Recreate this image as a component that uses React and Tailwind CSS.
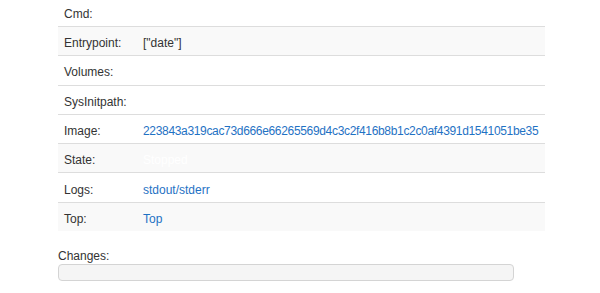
import React from "react";

const rows = [
  { label: "Cmd:", value: null, striped: false },
  { label: "Entrypoint:", value: '["date"]', striped: true },
  { label: "Volumes:", value: null, striped: false },
  { label: "SysInitpath:", value: null, striped: false },
  {
    label: "Image:",
    value: "223843a319cac73d666e66265569d4c3c2f416b8b1c2c0af4391d1541051be35",
    link: true,
    hash: true,
    striped: false,
  },
  { label: "State:", value: "Stopped", state: true, striped: true },
  { label: "Logs:", value: "stdout/stderr", link: true, striped: false },
  { label: "Top:", value: "Top", link: true, striped: true },
];

function Row({ row }) {
  return (
    <div
      className={`flex h-[29.3px] items-center border-t border-[#dddddd] pt-[4px] ${
        row.striped ? "bg-[#f9f9f9]" : "bg-white"
      }`}
    >
      <div className="w-[85px] pl-[6px] text-[#333333]">{row.label}</div>
      <div className="flex-1 whitespace-nowrap">
        {row.value &&
          (row.link ? (
            <a
              href="#"
              className={`text-[#1f72c4] no-underline ${
                row.hash ? "tracking-[-0.33px]" : ""
              }`}
            >
              {row.value}
            </a>
          ) : row.state ? (
            <span className="text-white">{row.value}</span>
          ) : (
            <span className="text-[#333333]">{row.value}</span>
          ))}
      </div>
    </div>
  );
}

export default function App() {
  return (
    <div className="h-[293px] w-[600px] overflow-hidden bg-white font-['Liberation_Sans',Arial,sans-serif] text-[12px] leading-[20px]">
      <div className="ml-[58px] mt-[-3.3px] w-[487px]">
        {rows.map((r) => (
          <Row key={r.label} row={r} />
        ))}
      </div>
      <div className="ml-[58px] mt-[15px] text-[#333333]">Changes:</div>
      <div className="ml-[58px] mt-[-2px] h-[17px] w-[456px] rounded-[4px] border border-[#d4d4d4] bg-[#f5f5f5]" />
    </div>
  );
}
